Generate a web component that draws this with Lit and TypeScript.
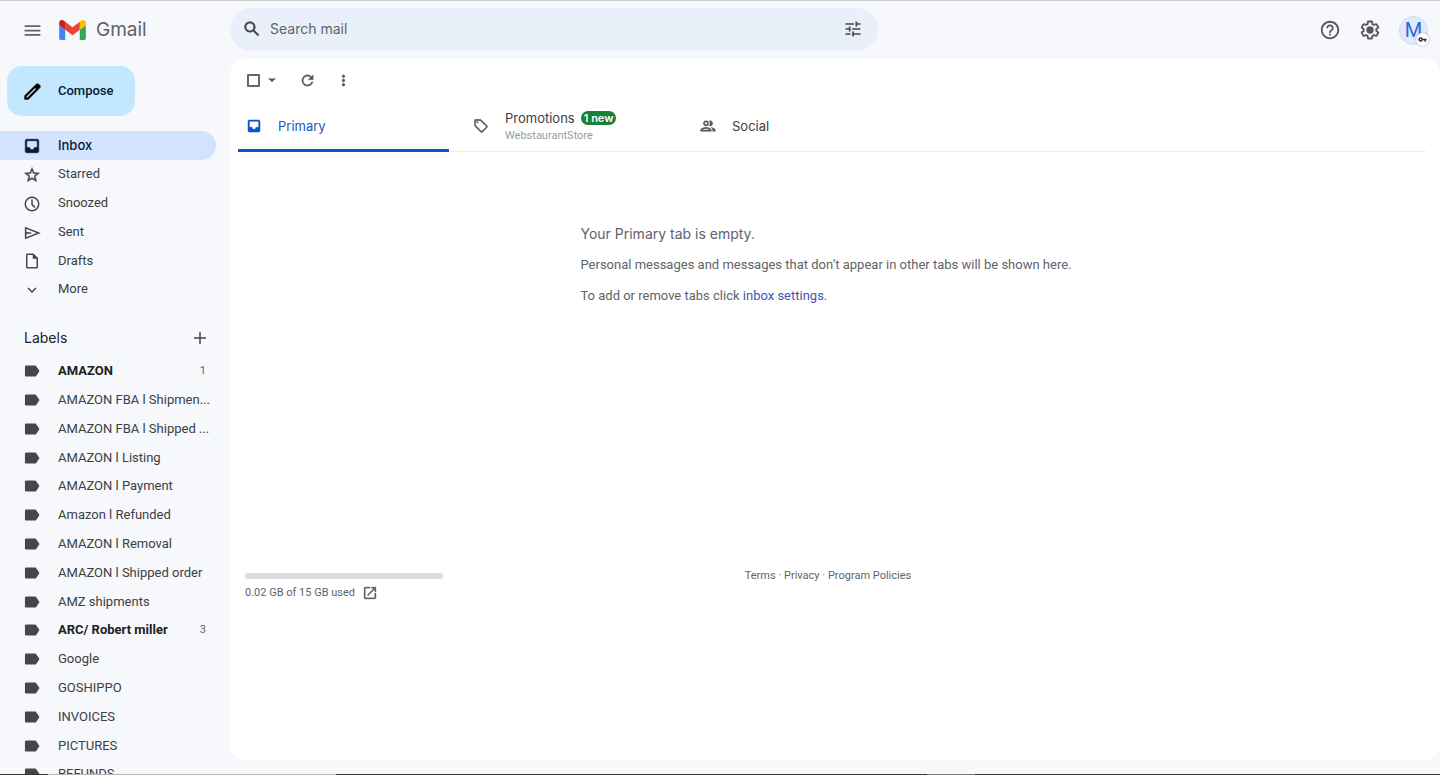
import { LitElement, html, css, svg } from "lit";
import { customElement, property } from "lit/decorators.js";

const icons: Record<string, unknown> = {
  menu: svg`<path d="M3 18h18v-2H3v2zm0-5h18v-2H3v2zm0-7v2h18V6H3z"/>`,
  search: svg`<path d="M20.49 19l-5.73-5.73C15.53 12.2 16 10.91 16 9.5A6.5 6.5 0 1 0 9.5 16c1.41 0 2.7-.47 3.77-1.24L19 20.49 20.49 19zM5 9.5C5 7.01 7.01 5 9.5 5S14 7.01 14 9.5 11.99 14 9.5 14 5 11.99 5 9.5z" stroke="currentColor" stroke-width=".5"/>`,
  tune: svg`<path d="M3 17v2h6v-2H3zM3 5v2h10V5H3zm10 16v-2h8v-2h-8v-2h-2v6h2zM7 9v2H3v2h4v2h2V9H7zm14 4v-2H11v2h10zm-6-4h2V7h4V5h-4V3h-2v6z"/>`,
  help: svg`<path d="M11 18h2v-2h-2v2zm1-16C6.480 2 2 6.480 2 12s4.480 10 10 10 10-4.480 10-10S17.520 2 12 2zm0 18c-4.410 0-8-3.590-8-8s3.590-8 8-8 8 3.590 8 8-3.590 8-8 8zm0-14c-2.210 0-4 1.790-4 4h2c0-1.100.9-2 2-2s2 .9 2 2c0 2-3 1.750-3 5h2c0-2.250 3-2.500 3-5 0-2.210-1.790-4-4-4z"/>`,
  gear: svg`<path d="M13.850 22.250h-3.700c-.74 0-1.360-.54-1.450-1.270l-.27-1.890c-.27-.14-.53-.29-.79-.46l-1.800.72c-.7.260-1.470-.03-1.810-.65L2.200 15.530c-.35-.66-.2-1.440.360-1.880l1.530-1.190c-.01-.15-.02-.3-.02-.46 0-.15.010-.31.020-.46l-1.520-1.190c-.59-.45-.74-1.260-.37-1.880l1.850-3.190c.34-.62 1.110-.9 1.790-.63l1.810.73c.26-.17.520-.32.780-.46l.27-1.910c.09-.7.710-1.250 1.440-1.250h3.700c.74 0 1.360.54 1.450 1.270l.27 1.890c.27.140.530.290.790.460l1.800-.72c.71-.26 1.480.03 1.820.650l1.840 3.180c.36.660.200 1.440-.36 1.880l-1.520 1.190c.01.150.020.300.020.460s-.01.310-.02.460l1.520 1.190c.56.450.720 1.230.370 1.860l-1.860 3.220c-.34.620-1.110.900-1.800.630l-1.800-.72c-.26.170-.52.320-.78.460l-.27 1.910c-.1.680-.72 1.220-1.460 1.220zm-3.230-2h2.760l.37-2.550.53-.22c.44-.18.880-.44 1.340-.78l.45-.34 2.380.96 1.380-2.400-2.030-1.580.07-.56c.03-.26.060-.51.060-.78s-.03-.53-.06-.78l-.07-.56 2.030-1.580-1.390-2.400-2.390.96-.45-.35c-.42-.32-.87-.58-1.330-.77l-.52-.22-.37-2.550h-2.760l-.37 2.550-.53.210c-.44.190-.88.440-1.340.790l-.45.330-2.380-.95-1.390 2.390 2.030 1.580-.07.560a7 7 0 0 0-.06.790c0 .26.020.53.060.78l.07.560-2.030 1.580 1.380 2.400 2.390-.96.45.35c.43.330.860.580 1.330.770l.53.220.38 2.550z"/><circle cx="12" cy="12" r="4"/>`,
  pencil: svg`<path d="M20.410 4.940l-1.350-1.350c-.78-.78-2.050-.78-2.830 0L3 16.820V21h4.180L20.410 7.770c.79-.78.790-2.050 0-2.830zM6.410 19.060L5 19v-1.360l9.820-9.820 1.410 1.410-9.820 9.830z" stroke="currentColor" stroke-width=".6"/>`,
  inbox: svg`<path d="M19 3H5c-1.100 0-2 .9-2 2v14c0 1.100.9 2 2 2h14c1.100 0 2-.9 2-2V5c0-1.100-.9-2-2-2zm0 11h-4c0 1.660-1.340 3-3 3s-3-1.340-3-3H5V5h14v9z" stroke="currentColor" stroke-width=".8"/>`,
  star: svg`<path d="M22 9.240l-7.190-.62L12 2 9.190 8.630 2 9.240l5.460 4.730L5.820 21 12 17.270 18.180 21l-1.630-7.030L22 9.240zM12 15.400l-3.760 2.270 1-4.280-3.320-2.880 4.380-.38L12 6.100l1.710 4.040 4.380.38-3.320 2.880 1 4.280L12 15.400z" stroke="currentColor" stroke-width=".6"/>`,
  clock: svg`<path d="M12 2a10 10 0 1 0 0 20 10 10 0 0 0 0-20zm0 18a8 8 0 1 1 0-16 8 8 0 0 1 0 16z"/><path d="M11 6h2v6l3.500 3.800-1.400 1.400L11 13z"/>`,
  send: svg`<path d="M3.500 5v14L21 12z" fill="none" stroke="currentColor" stroke-width="2"/><path d="M4 11l7 1-7 1z" stroke="currentColor"/>`,
  draft: svg`<path d="M14 2H6c-1.100 0-2 .9-2 2v16c0 1.100.9 2 2 2h12c1.100 0 2-.9 2-2V8l-6-6zM6 20V4h7v5h5v11H6z"/>`,
  chevron: svg`<path d="M7.410 8.590L12 13.170l4.590-4.580L18 10l-6 6-6-6z"/>`,
  plus: svg`<path d="M20 13h-7v7h-2v-7H4v-2h7V4h2v7h7v2z"/>`,
  label: svg`<path d="M17.630 5.500C17.270 5 16.670 4.600 16 4.600L4.500 4.610C3.400 4.610 2.600 5.400 2.600 6.500v11c0 1.100.8 1.890 1.900 1.890L16 19.400c.67 0 1.270-.4 1.630-.9L22 12l-4.370-6.500z"/>`,
  caret: svg`<path d="M4 9l8 7 8-7z"/>`,
  refresh: svg`<path d="M17.650 6.350A7.960 7.960 0 0 0 12 4a8 8 0 1 0 7.730 10h-2.080A6 6 0 1 1 12 6c1.660 0 3.140.69 4.220 1.780L13 11h7V4l-2.350 2.350z" stroke="currentColor" stroke-width=".5"/>`,
  dots: svg`<path d="M12 8c1.100 0 2-.9 2-2s-.9-2-2-2-2 .9-2 2 .9 2 2 2zm0 2c-1.100 0-2 .9-2 2s.9 2 2 2 2-.9 2-2-.9-2-2-2zm0 6c-1.100 0-2 .9-2 2s.9 2 2 2 2-.9 2-2-.9-2-2-2z" stroke="currentColor" stroke-width=".5"/>`,
  tag: svg`<path d="M21.410 11.580l-9-9A2 2 0 0 0 11 2H4a2 2 0 0 0-2 2v7c0 .55.22 1.050.59 1.420l9 9a2 2 0 0 0 2.820 0l7-7a2 2 0 0 0 0-2.840zM13 20.010L4 11V4h7v-.01l9 9-7 7.020z" stroke="currentColor" stroke-width=".5"/><circle cx="6.500" cy="6.500" r="1.500"/>`,
  people: svg`<path d="M9 12a4 4 0 1 0 0-8 4 4 0 0 0 0 8zm0-6a2 2 0 1 1 0 4 2 2 0 0 1 0-4zm0 8c-2.670 0-8 1.340-8 4v2h16v-2c0-2.660-5.330-4-8-4zm-5.900 4c.64-.9 3.300-2 5.900-2s5.260 1.100 5.900 2H3.100zM15 12a4 4 0 0 0 0-8c-.47 0-.91.1-1.330.24a5.980 5.980 0 0 1 0 7.520c.42.140.860.240 1.330.240zm1.660 2.130C18.030 15.060 19 16.320 19 18v2h4v-2c0-2.180-3.580-3.470-6.340-3.870z" stroke="currentColor" stroke-width=".6"/>`,
  open: svg`<path d="M19 19H5V5h7V3H5a2 2 0 0 0-2 2v14a2 2 0 0 0 2 2h14c1.100 0 2-.9 2-2v-7h-2v7zM14 3v2h3.590l-9.830 9.830 1.410 1.410L19 6.410V10h2V3h-7z" stroke="currentColor" stroke-width=".5"/>`,
  key: svg`<path d="M12.650 10A6 6 0 1 0 12.650 14H17v4h4v-4h2v-4H12.650zM7 14a2 2 0 1 1 0-4 2 2 0 0 1 0 4z"/>`,
};

@customElement("mail-icon")
class MailIcon extends LitElement {
  static styles = css`
    :host { display: block; flex: none; width: 18px; height: 18px; }
    svg { display: block; width: 100%; height: 100%; fill: currentColor; }
  `;
  @property() name = "";
  render() {
    return html`<svg viewBox="0 0 24 24" aria-hidden="true">${icons[this.name]}</svg>`;
  }
}

interface Row { text: string; icon: string; count?: number; active?: boolean }

const folders: Row[] = [
  { text: "Inbox", icon: "inbox", active: true },
  { text: "Starred", icon: "star" },
  { text: "Snoozed", icon: "clock" },
  { text: "Sent", icon: "send" },
  { text: "Drafts", icon: "draft" },
  { text: "More", icon: "chevron" },
];

const labels: Row[] = [
  { text: "AMAZON", icon: "label", count: 1 },
  { text: "AMAZON FBA l Shipmen...", icon: "label" },
  { text: "AMAZON FBA l Shipped ...", icon: "label" },
  { text: "AMAZON l Listing", icon: "label" },
  { text: "AMAZON l Payment", icon: "label" },
  { text: "Amazon l Refunded", icon: "label" },
  { text: "AMAZON l Removal", icon: "label" },
  { text: "AMAZON l Shipped order", icon: "label" },
  { text: "AMZ shipments", icon: "label" },
  { text: "ARC/ Robert miller", icon: "label", count: 3 },
  { text: "Google", icon: "label" },
  { text: "GOSHIPPO", icon: "label" },
  { text: "INVOICES", icon: "label" },
  { text: "PICTURES", icon: "label" },
  { text: "REFUNDS", icon: "label" },
];

@customElement("app-root")
class AppRoot extends LitElement {
  static styles = css`
    :host {
      display: flex;
      flex-direction: column;
      box-sizing: border-box;
      height: 100vh;
      overflow: hidden;
      border-top: 1px solid #c9cad0;
      background: #f6f8fc;
      color: #202124;
      font: 13px/16px Inter, "Liberation Sans", sans-serif;
    }
    * { box-sizing: border-box; }
    button, input { font: inherit; color: inherit; }
    button { border: 0; padding: 0; margin: 0; background: none; cursor: pointer; }
    a { color: inherit; text-decoration: none; }
    ul { list-style: none; margin: 0; padding: 0; }
    h2, p { margin: 0; font-weight: 400; }

    .top { display: flex; align-items: center; height: 58px; flex: none; padding-right: 12px; }
    .brand { display: flex; align-items: center; width: 230px; flex: none; padding-left: 22px; color: #5f6368; }
    .burger mail-icon { width: 21px; height: 21px; }
    .logo { display: flex; align-items: center; gap: 10px; margin-left: 16px; font-size: 19px; line-height: 24px; }
    .logo svg { display: block; width: 27px; height: 20px; }
    .search { display: flex; align-items: center; flex: 0 1 648px; height: 43px; margin-bottom: 2px; padding: 0 15px 0 12px; border-radius: 22px; background: #e9f0fa; color: #444746; }
    .search mail-icon { width: 20px; height: 20px; }
    .search input { flex: 1; min-width: 0; border: 0; outline: 0; background: none; margin-left: 8px; padding: 0; font-size: 14px; }
    .search input::placeholder { color: #5f6368; opacity: 1; }
    .tools { display: flex; align-items: center; gap: 18px; margin-left: auto; color: #54575b; }
    .tools mail-icon { width: 22px; height: 22px; }
    .avatar { position: relative; width: 29px; height: 29px; border: 1px solid #cfdcf2; border-radius: 50%; background: #dfeafa; color: #2f66dc; font: 20px/26px Roboto, sans-serif; }
    .badge { position: absolute; right: -2px; bottom: -2px; display: grid; place-items: center; width: 13px; height: 13px; border-radius: 50%; background: #fff; box-shadow: 0 0 2px #999; color: #333; }
    .tools .badge mail-icon { width: 9px; height: 9px; }

    .body { display: flex; flex: 1; min-height: 0; }
    .side { width: 230px; flex: none; padding-top: 7px; overflow: hidden; font-family: Roboto, Inter, sans-serif; }
    .compose { display: flex; align-items: center; gap: 15px; height: 50px; margin-left: 7px; padding: 0 21px 0 15px; border-radius: 15px; background: #c2e7ff; color: #001d35; font-weight: 500; }
    .compose mail-icon { width: 21px; height: 21px; color: #000; }
    .folders { margin-top: 15px; }
    .row { display: flex; align-items: center; height: 29px; margin-right: 14px; padding: 0 10px 0 23px; border-radius: 0 15px 15px 0; color: #3c4043; }
    li:nth-child(5n) .row { height: 28px; }
    .row .text { flex: 1; min-width: 0; margin-left: 17px; white-space: nowrap; }
    .row .count { font-size: 11px; color: #5f6368; margin-left: 10px; }
    .row mail-icon { color: #444746; }
    .folders .text { padding-bottom: 1px; }
    .active { background: #d3e3fd; color: #001d35; font-weight: 500; font-family: Inter, sans-serif; }
    .row.active mail-icon { color: #001d35; }
    .unread .text { font-weight: 700; color: #202124; }
    .heading { display: flex; align-items: center; justify-content: space-between; height: 20px; margin: 24px 21px 0 24px; }
    .heading h2 { font: 14px/20px Inter, sans-serif; }
    .heading button { color: #444746; }
    .labels { margin-top: 8px; }

    .panel { display: flex; flex-direction: column; flex: 1; min-width: 0; margin-bottom: 15px; border-radius: 15px; background: #fff; }
    .actions { display: flex; align-items: center; height: 42px; padding-left: 15px; color: #54575b; }
    .actions mail-icon { width: 17px; height: 17px; }
    .pick { display: flex; align-items: center; margin-right: 21px; }
    .pick input { appearance: none; width: 13px; height: 13px; margin: 0 6px 0 2px; border: 2px solid #65686c; border-radius: 1px; }
    .actions .pick mail-icon { width: 12px; height: 12px; }
    .again { margin-right: 19px; }
    .tabs { display: flex; height: 51px; margin: 0 14px 0 8px; border-bottom: 1px solid #eceef1; }
    .tab { display: flex; align-items: center; width: 211px; margin-right: 16px; padding-left: 8px; text-align: left; color: #3c4043; }
    .tab mail-icon { width: 16px; height: 16px; color: #54575b; }
    .tab .name { margin-left: 16px; }
    .tab.on { height: 51px; border-bottom: 3px solid #0b57d0; color: #1a56c4; padding-top: 2px; }
    .tab.on mail-icon { color: #0b57d0; }
    .tab .stack { padding-top: 2px; }
    .title { display: flex; align-items: center; gap: 6px; height: 17px; }
    .new { padding: 0 3px; border-radius: 7px; background: #188038; color: #fff; font-size: 11px; line-height: 14px; font-weight: 600; }
    .from { display: block; font: 11px/18px Roboto, sans-serif; color: #9a9c9f; }
    .empty { align-self: center; display: flex; flex-direction: column; gap: 15px; padding: 74px 18px 0 0; color: #5f6368; font-family: Roboto, Inter, sans-serif; }
    .empty h2 { font: 14px/16px Inter, sans-serif; }
    .empty a { color: #3a56b5; }
    .foot { display: grid; grid-template-columns: 1fr auto 1fr; margin-top: 265px; padding: 0 29px 0 15px; color: #5f6368; font: 11px/14px Roboto, Inter, sans-serif; }
    .quota { width: 198px; }
    .bar { height: 6px; border-radius: 3px; background: #dadce0; margin-top: 4px; }
    .used { display: flex; align-items: center; gap: 7px; margin-top: 6px; }
    .used mail-icon { width: 16px; height: 16px; }
    .edge { position: absolute; left: 0; right: 0; bottom: 0; height: 1px; background: linear-gradient(90deg, #33343a 48px, #b5b6ba 48px 336px, #333 336px 927px, #77787c 927px 975px, #333 975px); }
  `;

  private row(r: Row) {
    const cls = "row" + (r.active ? " active" : "") + (r.count ? " unread" : "");
    return html`<li><a class=${cls} href="#">
      <mail-icon name=${r.icon}></mail-icon><span class="text">${r.text}</span>
      ${r.count ? html`<span class="count">${r.count}</span>` : ""}
    </a></li>`;
  }

  render() {
    return html`
      <header class="top">
        <div class="brand">
          <button class="burger" aria-label="Main menu"><mail-icon name="menu"></mail-icon></button>
          <a class="logo" href="#">
            <svg viewBox="52 42 88 66" aria-hidden="true">
              <path fill="#4285f4" d="M58 108h14V74L52 59v43c0 3.320 2.690 6 6 6"/>
              <path fill="#34a853" d="M120 108h14c3.320 0 6-2.690 6-6V59l-20 15"/>
              <path fill="#fbbc04" d="M120 48v26l20-15v-8c0-7.420-8.470-11.650-14.400-7.200"/>
              <path fill="#ea4335" d="M72 74V48l24 18 24-18v26L96 92"/>
              <path fill="#c5221f" d="M52 51v8l20 15V48l-5.600-4.200c-5.940-4.450-14.400-.22-14.400 7.200"/>
            </svg>
            <span>Gmail</span>
          </a>
        </div>
        <form class="search" role="search">
          <button type="button" aria-label="Search"><mail-icon name="search"></mail-icon></button>
          <input type="text" aria-label="Search mail" placeholder="Search mail" />
          <button type="button" aria-label="Search options"><mail-icon name="tune"></mail-icon></button>
        </form>
        <div class="tools">
          <button aria-label="Support"><mail-icon name="help"></mail-icon></button>
          <button aria-label="Settings"><mail-icon name="gear"></mail-icon></button>
          <button class="avatar" aria-label="Account">M<span class="badge"><mail-icon name="key"></mail-icon></span></button>
        </div>
      </header>
      <div class="body">
        <nav class="side">
          <button class="compose"><mail-icon name="pencil"></mail-icon>Compose</button>
          <ul class="folders">${folders.map((r) => this.row(r))}</ul>
          <div class="heading"><h2>Labels</h2><button aria-label="Create label"><mail-icon name="plus"></mail-icon></button></div>
          <ul class="labels">${labels.map((r) => this.row(r))}</ul>
        </nav>
        <main class="panel">
          <div class="actions">
            <span class="pick"><input type="checkbox" aria-label="Select" /><button aria-label="Select options"><mail-icon name="caret"></mail-icon></button></span>
            <button class="again" aria-label="Refresh"><mail-icon name="refresh"></mail-icon></button>
            <button aria-label="More"><mail-icon name="dots"></mail-icon></button>
          </div>
          <div class="tabs" role="tablist">
            <button class="tab on" role="tab" aria-selected="true"><mail-icon name="inbox"></mail-icon><span class="name">Primary</span></button>
            <button class="tab" role="tab"><mail-icon name="tag"></mail-icon><span class="name stack"><span class="title">Promotions <span class="new">1 new</span></span><span class="from">WebstaurantStore</span></span></button>
            <button class="tab" role="tab"><mail-icon name="people"></mail-icon><span class="name">Social</span></button>
          </div>
          <section class="empty">
            <h2>Your Primary tab is empty.</h2>
            <p>Personal messages and messages that don’t appear in other tabs will be shown here.</p>
            <p>To add or remove tabs click <a href="#">inbox settings</a>.</p>
          </section>
          <footer class="foot">
            <div class="quota"><div class="bar"></div><div class="used">0.02 GB of 15 GB used <a href="#" aria-label="Manage storage"><mail-icon name="open"></mail-icon></a></div></div>
            <div><a href="#">Terms</a> · <a href="#">Privacy</a> · <a href="#">Program Policies</a></div>
          </footer>
        </main>
      </div>
      <div class="edge"></div>
    `;
  }
}
